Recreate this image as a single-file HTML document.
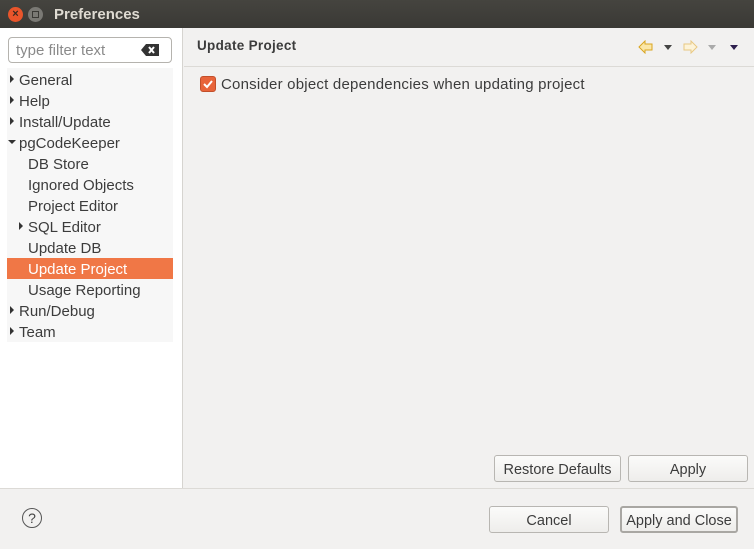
<!DOCTYPE html>
<html><head><style>
*{margin:0;padding:0;box-sizing:border-box}
body{width:754px;height:549px;background:#f2f1f0;font-family:"Liberation Sans","DejaVu Sans",sans-serif;position:relative;overflow:hidden;color:#3c3c3c}
.abs{position:absolute}
.title{left:0;top:0;width:754px;height:28px;background:linear-gradient(#45443f,#3a3935);}
.title span{position:absolute;left:54px;top:6px;color:#dfdbd2;font-weight:bold;font-size:15px}
.left{left:0;top:28px;width:183px;height:460px;background:#fff;border-right:1px solid #d6d4d0}
.tree{left:7px;top:68px;width:166px;height:274px;background:#f7f7f7}
.row{position:absolute;left:7px;width:166px;height:21px;font-size:15px;line-height:23px;color:#3c3c3c}
.row.sel{background:#f07746;color:#fff}
.tri{position:absolute;top:6px;width:0;height:0;border-top:4px solid transparent;border-bottom:4px solid transparent;border-left:4px solid #333}
.trid{position:absolute;top:8px;width:0;height:0;border-left:4px solid transparent;border-right:4px solid transparent;border-top:4px solid #333}
.btn{position:absolute;height:27px;border:1px solid #b8b6b2;border-radius:3px;background:linear-gradient(#fbfbfa,#eeedeb);font-size:14.5px;text-align:center;line-height:28px;color:#3c3c3c}
</style></head><body>
<div class="abs title"><span>Preferences</span>
<div class="abs" style="left:8px;top:7px;width:15px;height:15px;border-radius:50%;background:#e9552b;color:#3a2a20;font-size:11px;line-height:15px;text-align:center;font-weight:bold">×</div>
<div class="abs" style="left:28px;top:7px;width:15px;height:15px;border-radius:50%;background:#7a7974"><div class="abs" style="left:4px;top:4px;width:7px;height:7px;border:1px solid #3a3935"></div></div>
</div>
<div class="abs left"></div>
<div class="abs" style="left:8px;top:37px;width:164px;height:26px;border:1px solid #b5b3ae;border-radius:4px;background:#fff;font-size:15px;color:#8a8a8a;line-height:25px;padding-left:7px">type filter text
<svg class="abs" style="left:132px;top:6px" width="18" height="12"><path d="M0 6L5 0H18V12H5Z" fill="#333"/><path d="M8 3L13 9M13 3L8 9" stroke="#fff" stroke-width="2"/></svg></div>
<div class="abs tree"></div>
<div class="row" style="top:69px"><i class="tri" style="left:3px"></i><span style="margin-left:12px">General</span></div>
<div class="row" style="top:90px"><i class="tri" style="left:3px"></i><span style="margin-left:12px">Help</span></div>
<div class="row" style="top:111px"><i class="tri" style="left:3px"></i><span style="margin-left:12px">Install/Update</span></div>
<div class="row" style="top:132px"><i class="trid" style="left:1px"></i><span style="margin-left:12px">pgCodeKeeper</span></div>
<div class="row" style="top:153px"><span style="margin-left:21px">DB Store</span></div>
<div class="row" style="top:174px"><span style="margin-left:21px">Ignored Objects</span></div>
<div class="row" style="top:195px"><span style="margin-left:21px">Project Editor</span></div>
<div class="row" style="top:216px"><i class="tri" style="left:12px"></i><span style="margin-left:21px">SQL Editor</span></div>
<div class="row" style="top:237px"><span style="margin-left:21px">Update DB</span></div>
<div class="row sel" style="top:258px"><span style="margin-left:21px">Update Project</span></div>
<div class="row" style="top:279px"><span style="margin-left:21px">Usage Reporting</span></div>
<div class="row" style="top:300px"><i class="tri" style="left:3px"></i><span style="margin-left:12px">Run/Debug</span></div>
<div class="row" style="top:321px"><i class="tri" style="left:3px"></i><span style="margin-left:12px">Team</span></div>

<div class="abs" style="left:197px;top:38px;font-weight:bold;font-size:13.5px;color:#3c3c3c;letter-spacing:0.3px">Update Project</div>
<svg class="abs" style="left:638px;top:40px" width="110" height="14">
<path d="M1 7L7 1V4H14V10H7V13Z" fill="#fbe7a8" stroke="#d9a520"/>
<path d="M26 5H34L30 10Z" fill="#444"/>
<path d="M59 7L53 1V4H46V10H53V13Z" fill="#fdf3d8" stroke="#e8c882"/>
<path d="M70 5H78L74 10Z" fill="#aaa"/>
<path d="M92 5H100L96 10Z" fill="#2e1f4e"/>
</svg>
<div class="abs" style="left:184px;top:66px;width:570px;height:1px;background:#dcdad6"></div>
<div class="abs" style="left:200px;top:76px;width:16px;height:16px;border-radius:3px;background:#e8643a;border:1px solid #c24f2a"></div>
<svg class="abs" style="left:200px;top:76px" width="16" height="16"><path d="M4 8L7 11L12 5" stroke="#fff" stroke-width="2" fill="none"/></svg>
<div class="abs" style="left:221px;top:76px;font-size:15px;letter-spacing:0.22px;color:#3c3c3c">Consider object dependencies when updating project</div>

<div class="btn" style="left:494px;top:455px;width:127px">Restore Defaults</div>
<div class="btn" style="left:628px;top:455px;width:120px">Apply</div>
<div class="abs" style="left:0;top:488px;width:754px;height:1px;background:#dcdad6"></div>
<div class="abs" style="left:22px;top:508px;width:20px;height:20px;border:1.5px solid #555;border-radius:50%;font-size:14px;text-align:center;line-height:18px;color:#444">?</div>
<div class="btn" style="left:489px;top:506px;width:120px">Cancel</div>
<div class="btn" style="left:620px;top:506px;width:118px;border:2px solid #a9a7a3;line-height:26px">Apply and Close</div>
</body></html>
